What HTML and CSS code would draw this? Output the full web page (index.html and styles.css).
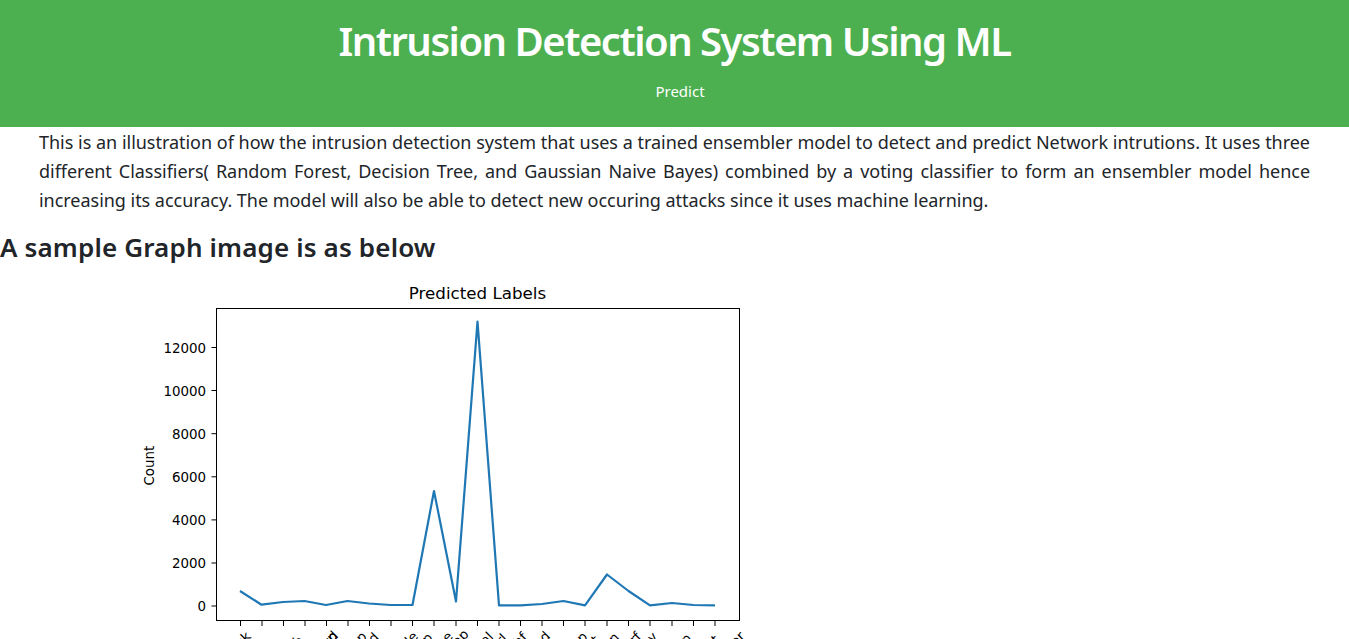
FILE: index.html
```html
<!DOCTYPE html>
<html lang="en">
<head>
    <meta charset="UTF-8">
    <meta name="viewport" content="width=device-width, initial-scale=1.0">
    <title>Intrusion Detection System Using ML</title>
    <link rel="stylesheet" href="styles.css">
</head>
<body>
    <header class="banner">
        <h1>Intrusion Detection System Using ML</h1>
        <nav class="nav"><a href="#">Predict</a></nav>
    </header>
    <p class="intro">This is an illustration of how the intrusion detection system that uses a trained ensembler model to detect and predict Network intrutions. It uses three different Classifiers( Random Forest, Decision Tree, and Gaussian Naive Bayes) combined by a voting classifier to form an ensembler model hence increasing its accuracy. The model will also be able to detect new occuring attacks since it uses machine learning.</p>
    <h2>A sample Graph image is as below</h2>
    <svg class="graph" viewBox="132 276 675 363" width="675" height="363">
        <text class="title" x="477.5" y="299" text-anchor="middle">Predicted Labels</text>
        <text class="tick" transform="translate(154 485.500) rotate(-90)">Count</text>
        <g class="tick" text-anchor="end">
            <text x="206" y="352.500">12000</text>
            <text x="206" y="395.500">10000</text>
            <text x="206" y="438.500">8000</text>
            <text x="206" y="481.500">6000</text>
            <text x="206" y="524.500">4000</text>
            <text x="206" y="567.500">2000</text>
            <text x="206" y="610.500">0</text>
        </g>
        <path class="marks" d="M216.500 347.500h-5M216.500 390.500h-5M216.500 433.700h-5M216.500 476.800h-5M216.500 519.900h-5M216.500 563h-5M216.500 606h-5"/>
        <path class="marks" d="M240.500 621v5M262 621v5M283.500 621v5M305 621v5M326.500 621v5M348 621v5M369.500 621v5M391 621v5M412.500 621v5M434 621v5M456 621v5M477.500 621v5M499 621v5M520.500 621v5M542 621v5M563.500 621v5M585 621v5M607 621v5M628.500 621v5M650 621v5M672 621v5M693.500 621v5M715 621v5"/>
        <polyline class="line" points="240,591 261.500,604.700 283,602 304.500,601 326,605 347.500,601 369,603.500 390.500,605 412.500,605 434,491 456,601.500 477.500,321.700 499,605.300 520.500,605.300 542,604 563.500,601 585,605.300 607,574.500 628.500,591 650,605.300 672,603 693.500,605 715,605.300"/>
        <rect class="frame" x="216.500" y="308.500" width="523" height="312"/>
        <g class="tick" text-anchor="middle">
            <text transform="translate(240.500 648.500) rotate(-45)">back</text>
            <text transform="translate(262 678.900) rotate(-45)">buffer_overflow</text>
            <text transform="translate(283.500 662.300) rotate(-45)">ftp_write</text>
            <text transform="translate(305 670.500) rotate(-45)">guess_passwd</text>
            <text transform="translate(326.500 648.500) rotate(-45)">imap</text>
            <text transform="translate(348 656.800) rotate(-45)">ipsweep</text>
            <text transform="translate(369.500 648.500) rotate(-45)">land</text>
            <text transform="translate(391 665.100) rotate(-45)">loadmodule</text>
            <text transform="translate(412.500 659.500) rotate(-45)">multihop</text>
            <text transform="translate(434 656.800) rotate(-45)">neptune</text>
            <text transform="translate(456 648.500) rotate(-45)">nmap</text>
            <text transform="translate(477.500 654.100) rotate(-45)">normal</text>
            <text transform="translate(499 648.500) rotate(-45)">perl</text>
            <text transform="translate(520.500 645.800) rotate(-45)">phf</text>
            <text transform="translate(542 645.800) rotate(-45)">pod</text>
            <text transform="translate(563.500 662.300) rotate(-45)">portsweep</text>
            <text transform="translate(585 656.800) rotate(-45)">rootkit</text>
            <text transform="translate(607 651.300) rotate(-45)">satan</text>
            <text transform="translate(628.500 651.300) rotate(-45)">smurf</text>
            <text transform="translate(650 645.800) rotate(-45)">spy</text>
            <text transform="translate(672 659.500) rotate(-45)">teardrop</text>
            <text transform="translate(693.500 667.900) rotate(-45)">warezclient</text>
            <text transform="translate(715 667.900) rotate(-45)">warezmaster</text>
        </g>
    </svg>
</body>
</html>
```

FILE: styles.css
```css
body {
    margin: 0;
    font-family: "Noto Sans", "Open Sans", sans-serif;
    color: #212529;
    background-color: #fff;
}
.banner {
    background-color: #4CAF50;
    color: white;
    text-align: center;
    height: 127px;
    padding-top: 16px;
    box-sizing: border-box;
}
.banner h1 {
    margin: 0;
    font-size: 40px;
    font-weight: 600;
    line-height: 50px;
    letter-spacing: -1.5px;
}
.nav {
    margin-top: 15px;
    padding-left: 11px;
    font-size: 15px;
    line-height: 20px;
}
.nav a {
    color: white;
    text-decoration: none;
}
.intro {
    margin: 1px 39px 0;
    font-size: 18px;
    line-height: 29px;
    letter-spacing: -0.03px;
    text-align: justify;
}
h2 {
    margin: 17px 0 0;
    font-size: 26px;
    font-weight: 600;
    line-height: 30px;
    letter-spacing: 0.15px;
}
.graph {
    display: block;
    margin: 14px 0 0 132px;
    font-family: "DejaVu Sans", sans-serif;
}
.title {
    font-size: 16.700px;
    fill: #000;
}
.tick {
    font-size: 13.400px;
    fill: #000;
}
.marks {
    fill: none;
    stroke: #000;
    stroke-width: 1;
}
.line {
    fill: none;
    stroke: #1f77b4;
    stroke-width: 2.200;
    stroke-linejoin: round;
}
.frame {
    fill: none;
    stroke: #000;
    stroke-width: 1;
}
```
